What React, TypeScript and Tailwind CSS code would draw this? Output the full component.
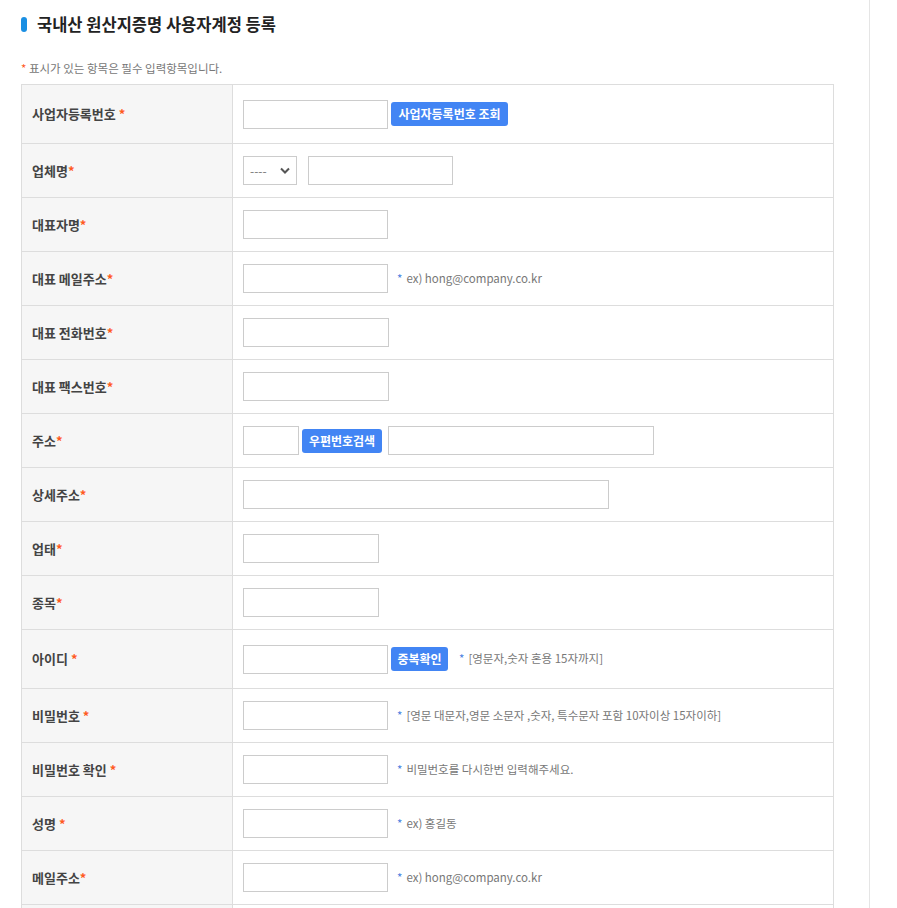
import React from 'react';

const FONT = { fontFamily: '"Noto Sans CJK KR", "Noto Sans", sans-serif' };

const Req = ({ gap = false }: { gap?: boolean }) => (
  <span className={`text-[#ff5a1f] ${gap ? 'ml-[3px]' : ''}`}>*</span>
);

const Hint: React.FC<{ text: string; className?: string }> = ({ text, className = 'ml-[9px]' }) => (
  <span className={`${className} text-[11.5px] text-[#777] whitespace-nowrap`}>
    <span className="text-[#4a7fe0] mr-1">*</span>
    {text}
  </span>
);

const Input: React.FC<{ w: string }> = ({ w }) => (
  <input type="text" className={`${w} h-[29px] border border-[#cccccc] bg-white outline-none px-2 text-[12px]`} />
);

const Btn: React.FC<{ label: string; w: string }> = ({ label, w }) => (
  <button className={`${w} h-[24px] ml-[3px] rounded-[3px] bg-[#4285f4] text-white text-[12px] font-bold leading-[24px] text-center`}>
    {label}
  </button>
);

const Row: React.FC<{ label: React.ReactNode; tall?: boolean; children: React.ReactNode }> = ({ label, tall, children }) => (
  <div className={`flex border-b border-[#dddddd] ${tall ? 'h-[59px]' : 'h-[54px]'}`}>
    <div className="w-[211px] shrink-0 bg-[#f6f6f6] border-r border-[#dddddd] flex items-center pl-[10px] text-[13px] font-bold text-[#444]">
      {label}
    </div>
    <div className="flex-1 flex items-center pl-[10px]">{children}</div>
  </div>
);

export default function App() {
  return (
    <div style={FONT} className="w-[870px] min-h-screen border-r border-[#e5e5e5] bg-white">
      <div className="pl-[21px] pt-[13px]">
        <h2 className="flex items-center text-[16.5px] font-bold text-[#222] leading-[22px]">
          <span className="inline-block w-[6px] h-[15px] rounded-full bg-[#1a8fe3] mr-[10px]" />
          국내산 원산지증명 사용자계정 등록
        </h2>
        <p className="mt-[25px] text-[11.5px] text-[#777] leading-[16px]">
          <span className="text-[#ff5a1f]">*</span> 표시가 있는 항목은 필수 입력항목입니다.
        </p>
        <div className="mt-[8px] w-[813px] border-t border-l border-r border-[#dddddd]">
          <Row tall label={<>사업자등록번호<Req gap /></>}>
            <Input w="w-[145px]" />
            <Btn label="사업자등록번호 조회" w="w-[117px]" />
          </Row>
          <Row label={<>업체명<Req /></>}>
            <div className="relative w-[54px] h-[29px] border border-[#cccccc] flex items-center pl-[6px] text-[12px] text-[#777]">
              ----
              <svg className="absolute right-[6px] top-[10px]" width="10" height="7" viewBox="0 0 10 7">
                <path d="M1 1.5 L5 5.5 L9 1.5" fill="none" stroke="#555" strokeWidth="2" />
              </svg>
            </div>
            <div className="ml-[11px]">
              <Input w="w-[145px]" />
            </div>
          </Row>
          <Row label={<>대표자명<Req /></>}>
            <Input w="w-[145px]" />
          </Row>
          <Row label={<>대표 메일주소<Req /></>}>
            <Input w="w-[145px]" />
            <Hint text="ex) hong@company.co.kr" />
          </Row>
          <Row label={<>대표 전화번호<Req /></>}>
            <Input w="w-[146px]" />
          </Row>
          <Row label={<>대표 팩스번호<Req /></>}>
            <Input w="w-[146px]" />
          </Row>
          <Row label={<>주소<Req /></>}>
            <Input w="w-[56px]" />
            <Btn label="우편번호검색" w="w-[80px]" />
            <div className="ml-[6px]">
              <Input w="w-[266px]" />
            </div>
          </Row>
          <Row label={<>상세주소<Req /></>}>
            <Input w="w-[366px]" />
          </Row>
          <Row label={<>업태<Req /></>}>
            <Input w="w-[136px]" />
          </Row>
          <Row label={<>종목<Req /></>}>
            <Input w="w-[136px]" />
          </Row>
          <Row tall label={<>아이디<Req gap /></>}>
            <Input w="w-[145px]" />
            <Btn label="중복확인" w="w-[57px]" />
            <Hint text="[영문자,숫자 혼용 15자까지]" className="ml-[11px]" />
          </Row>
          <Row label={<>비밀번호<Req gap /></>}>
            <Input w="w-[145px]" />
            <Hint text="[영문 대문자,영문 소문자 ,숫자, 특수문자 포함 10자이상 15자이하]" />
          </Row>
          <Row label={<>비밀번호 확인<Req gap /></>}>
            <Input w="w-[145px]" />
            <Hint text="비밀번호를 다시한번 입력해주세요." />
          </Row>
          <Row label={<>성명<Req gap /></>}>
            <Input w="w-[145px]" />
            <Hint text="ex) 홍길동" />
          </Row>
          <Row label={<>메일주소<Req /></>}>
            <Input w="w-[145px]" />
            <Hint text="ex) hong@company.co.kr" />
          </Row>
          <Row label={<>전화번호<Req /></>}>
            <Input w="w-[145px]" />
          </Row>
        </div>
      </div>
    </div>
  );
}
